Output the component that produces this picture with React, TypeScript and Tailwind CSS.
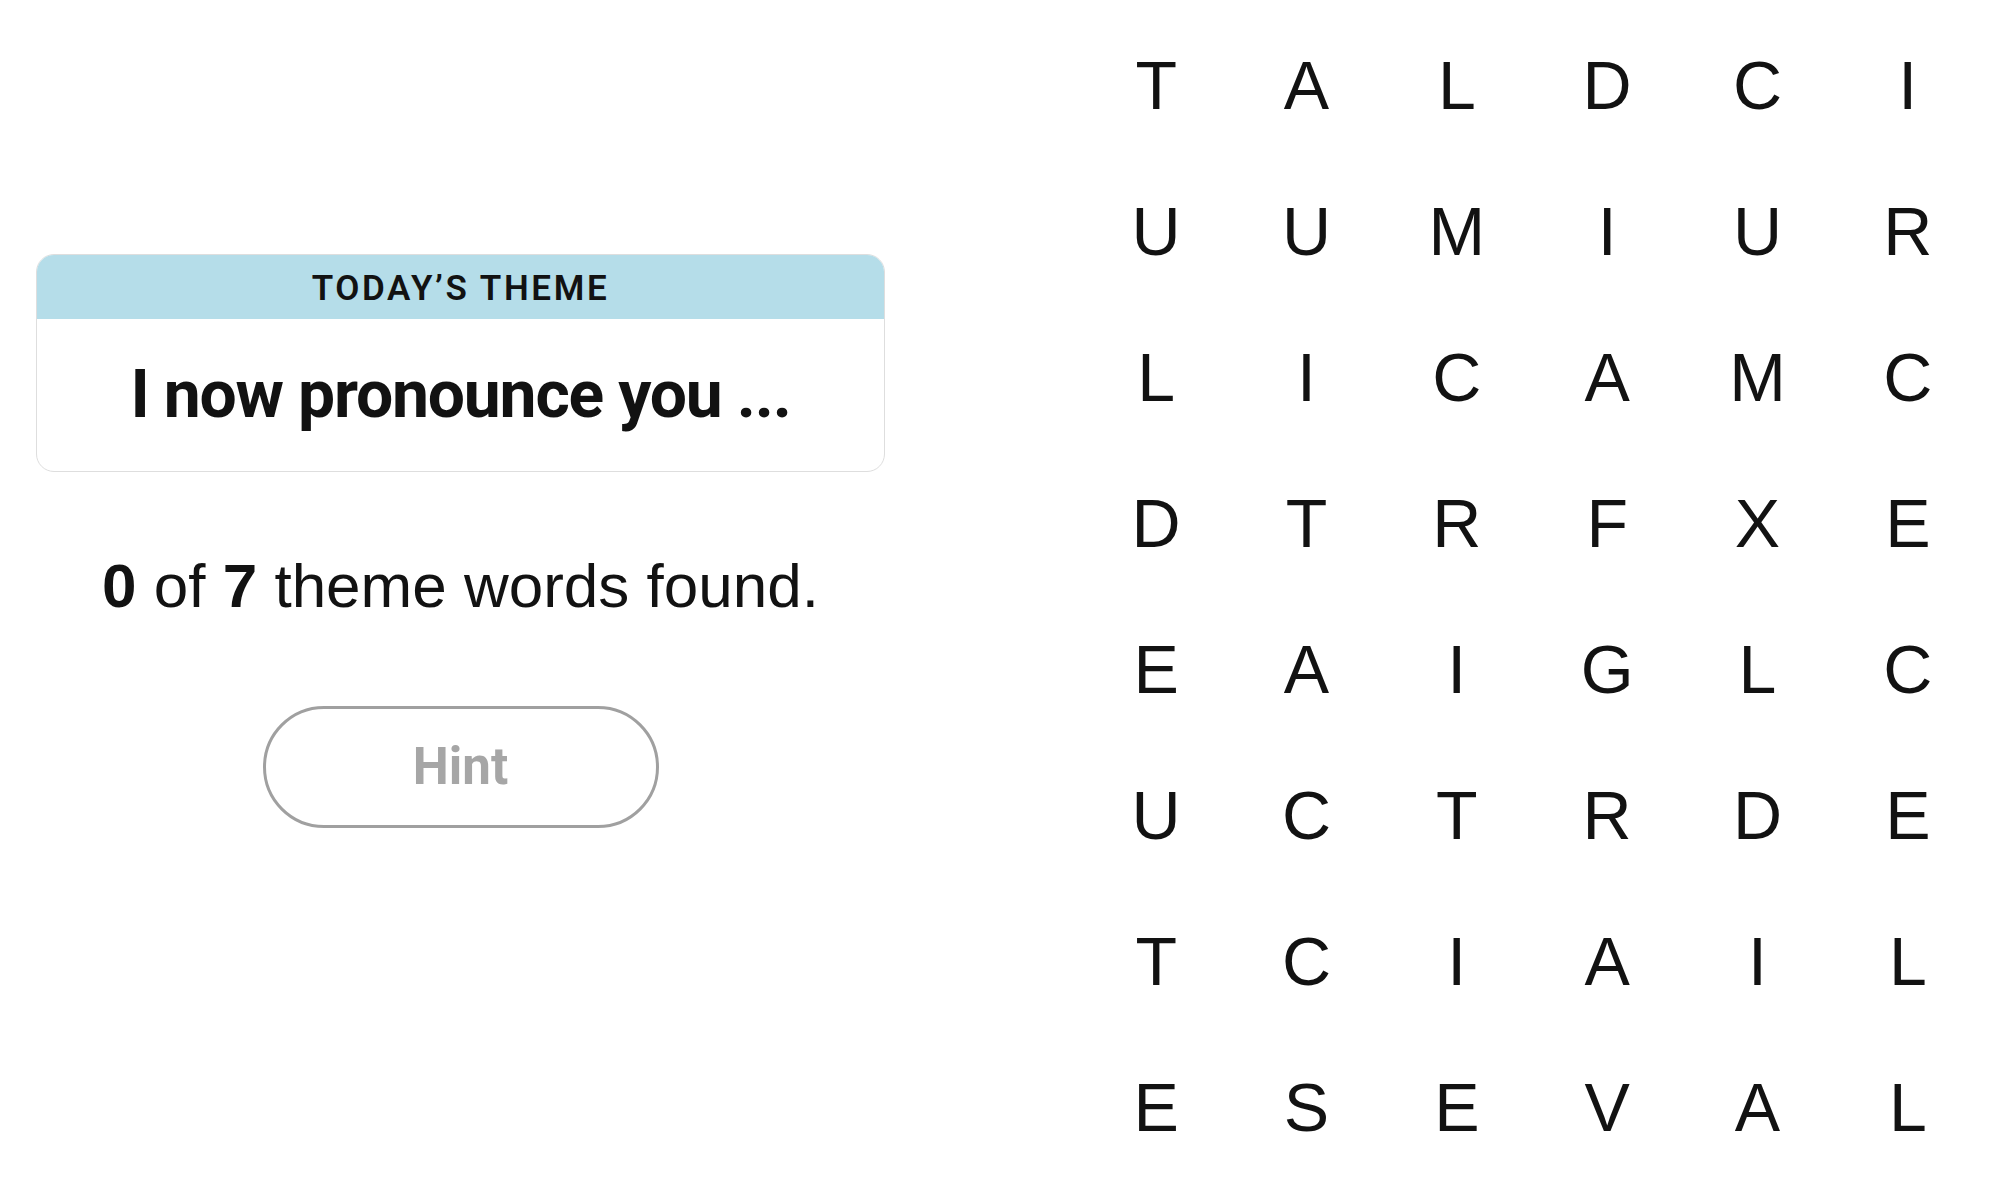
const rows: string[] = [
  "TALDCI",
  "UUMIUR",
  "LICAMC",
  "DTRFXE",
  "EAIGLC",
  "UCTRDE",
  "TCIAIL",
  "ESEVAL",
];

function ThemeCard() {
  return (
    <div className="w-full overflow-hidden rounded-[18px] border border-[#dedede] bg-white">
      <div className="flex h-[64px] items-center justify-center bg-[#b5dde9] pt-[4px]">
        <span className="font-['Roboto',sans-serif] text-[35px] font-semibold uppercase tracking-[2.6px] text-[#121212]">
          Today’s Theme
        </span>
      </div>
      <div className="flex h-[152px] items-center justify-center">
        <span className="font-['Roboto',sans-serif] text-[66px] font-bold leading-none tracking-[-1.2px] text-[#121212]">
          I now pronounce you ...
        </span>
      </div>
    </div>
  );
}

export default function App() {
  return (
    <div className="flex h-[1184px] w-[2000px] bg-white font-['Liberation_Sans',sans-serif] text-[#121212]">
      {/* Left: theme + progress */}
      <div className="flex w-[921px] flex-col items-center px-[36px] pt-[254px]">
        <ThemeCard />
        <p className="mt-[78px] text-[62px] leading-[72px]">
          <b>0</b> of <b>7</b> theme words found.
        </p>
        <button className="mt-[84px] flex h-[122px] w-[396px] items-center justify-center rounded-full border-[3px] border-[#a0a0a0] bg-white">
          <span className="font-['Roboto',sans-serif] text-[51px] font-bold text-[#a6a6a6]">
            Hint
          </span>
        </button>
      </div>

      {/* Right: letter board */}
      <div className="ml-[160px] grid w-[902px] grid-cols-6 self-start pt-[12px]">
        {rows.flatMap((row, r) =>
          row.split("").map((ch, c) => (
            <div
              key={r + "-" + c}
              className="flex h-[146px] items-center justify-center text-[68px] leading-none"
            >
              {ch}
            </div>
          ))
        )}
      </div>
    </div>
  );
}
